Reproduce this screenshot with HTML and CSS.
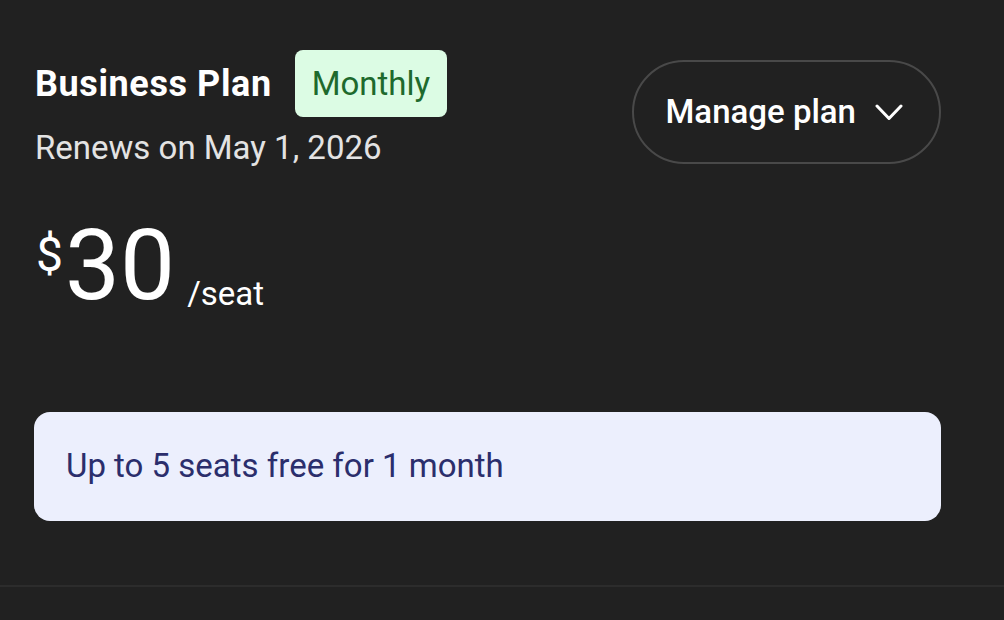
FILE: index.html
```html
<!DOCTYPE html>
<html lang="en">
<head>
    <meta charset="UTF-8">
    <meta name="viewport" content="width=device-width, initial-scale=1.0">
    <title>Billing - Plan</title>
    <link rel="stylesheet" href="styles.css">
</head>
<body>
    <section class="plan-card">
        <div class="plan-header">
            <div class="plan-info">
                <div class="plan-title-row">
                    <h2 class="plan-name">Business Plan</h2>
                    <span class="plan-badge">Monthly</span>
                </div>
                <p class="plan-renew">Renews on May 1, 2026</p>
            </div>

            <!-- Manage dropdown -->
            <button type="button" class="manage-btn">
                Manage plan
                <svg class="chevron" viewBox="0 0 28 17" width="28" height="17" aria-hidden="true">
                    <path d="M2 2 L14 14.5 L26 2" fill="none" stroke="currentColor" stroke-width="3" stroke-linecap="round" stroke-linejoin="round"/>
                </svg>
            </button>
        </div>

        <div class="plan-price">
            <span class="currency">$</span>
            <span class="amount">30</span>
            <span class="unit">/seat</span>
        </div>

        <div class="promo">Up to 5 seats free for 1 month</div>
    </section>
    <hr class="divider">
</body>
</html>
```

FILE: styles.css
```css
body {
    margin: 0;
    padding: 0;
    background-color: #212121;
    color: #ffffff;
    font-family: 'Roboto', 'Liberation Sans', sans-serif;
    min-height: 100vh;
}

.plan-card {
    padding: 50px 63px 0 34px;
}

.plan-header {
    display: flex;
    justify-content: space-between;
    align-items: center;
}

.plan-title-row {
    display: flex;
    align-items: center;
    gap: 23px;
}

.plan-name {
    margin: 0 0 0 1px;
    font-size: 36px;
    letter-spacing: 0.6px;
    font-weight: 700;
    color: #ffffff;
}

.plan-badge {
    background-color: #dcfce4;
    color: #1e6a2d;
    font-size: 33px;
    line-height: 43px;
    padding: 12px 17px;
    border-radius: 8px;
}

.plan-renew {
    margin: 11px 0 0 1px;
    font-size: 33px;
    color: #e3e3e3;
}

.manage-btn {
    display: flex;
    align-items: center;
    gap: 19px;
    margin-top: 6px;
    height: 104px;
    padding: 0 36px 0 31px;
    background: transparent;
    color: #ffffff;
    border: 2px solid #494949;
    border-radius: 52px;
    font-family: inherit;
    font-size: 33px;
    font-weight: 500;
    cursor: pointer;
}

.chevron {
    display: block;
    margin-top: 2px;
}

.plan-price {
    display: flex;
    margin-top: 50px;
    padding-left: 2px;
}

.currency {
    align-self: flex-start;
    font-size: 48px;
    line-height: 1;
    margin-top: 14px;
    margin-right: 2px;
}

.amount {
    font-size: 98px;
    line-height: 1;
}

/* sits a little under the figure's baseline */
.unit {
    align-self: flex-end;
    font-size: 33px;
    line-height: 42px;
    margin-left: 12px;
}

.promo {
    margin-top: 97px;
    background-color: #eceffd;
    color: #2b2e6c;
    border-radius: 16px;
    padding: 32px 32px 34px;
    font-size: 33px;
    line-height: 43px;
}

.divider {
    margin: 64px 0 0;
    border: none;
    height: 2px;
    background-color: #2c2c2c;
}
```
